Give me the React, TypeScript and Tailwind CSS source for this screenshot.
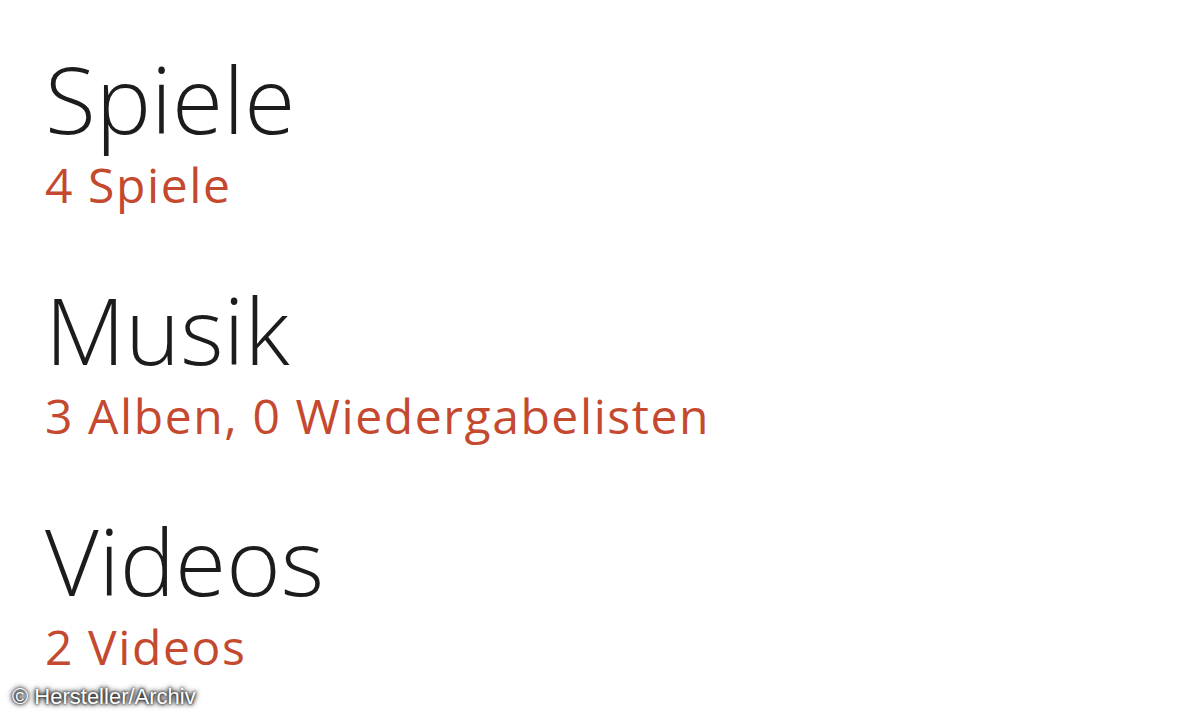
const sections = [
  { title: "Spiele", detail: "4 Spiele" },
  { title: "Musik", detail: "3 Alben, 0 Wiedergabelisten" },
  { title: "Videos", detail: "2 Videos" },
];

export default function App() {
  return (
    <div className="relative h-[720px] w-[1200px] overflow-hidden bg-white">
      <div className="flex flex-col gap-[74px] pl-[45px] pt-[52px] font-['Open_Sans',sans-serif]">
        {sections.map((s) => (
          <section key={s.title} className="flex flex-col gap-[16px]">
            <h2 className="text-[93px] leading-none font-light text-[#1c1c1c]">{s.title}</h2>
            <p className="text-[48px] leading-none font-normal tracking-[1.6px] text-[#c4492f]">{s.detail}</p>
          </section>
        ))}
      </div>
      <div className="absolute bottom-[12px] left-[12px] font-['Liberation_Sans',sans-serif] text-[22px] leading-none text-white [text-shadow:0_0_3px_#000,0_0_5px_#222,0_0_6px_#444]">
        © Hersteller/Archiv
      </div>
    </div>
  );
}
